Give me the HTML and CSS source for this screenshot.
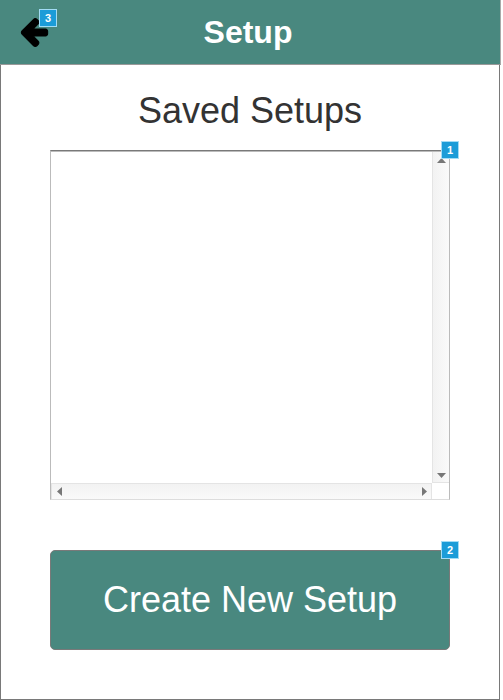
FILE: index.html
```html
<!DOCTYPE html>
<html lang="en">
<head>
<meta charset="utf-8">
<meta name="viewport" content="width=device-width, initial-scale=1">
<title>Setup</title>
<link rel="stylesheet" href="styles.css">
</head>
<body>
<div class="screen">
  <header class="header">
    <button class="back" type="button" aria-label="Back">
      <svg class="back-icon" viewBox="-20 0 1512 1600" aria-hidden="true"><path d="M1472 736v128q0 53-32.500 90.500t-84.500 37.500h-704l293 294q38 36 38 90t-38 90l-75 76q-37 37-90 37q-52 0-91-37l-651-652q-37-37-37-90q0-52 37-91l651-650q38-38 91-38q52 0 90 38l75 74q38 38 38 91t-38 91l-293 293h704q52 0 84.500 37.500t32.500 90.500z"/></svg>
      <span class="note">3</span>
    </button>
    <h1 class="title">Setup</h1>
  </header>
  <main class="content">
    <h2 class="heading">Saved Setups</h2>
    <section class="list" aria-label="Saved Setups">
      <div class="list-view"></div>
      <div class="bar bar-vertical">
        <button class="arrow" type="button" aria-label="Scroll up"><svg width="9" height="5" viewBox="0 0 9 5"><path d="M0 5L4.500 0L9 5z"/></svg></button>
        <button class="arrow" type="button" aria-label="Scroll down"><svg width="9" height="5" viewBox="0 0 9 5"><path d="M0 0L4.500 5L9 0z"/></svg></button>
      </div>
      <div class="bar bar-horizontal">
        <button class="arrow" type="button" aria-label="Scroll left"><svg width="5" height="9" viewBox="0 0 5 9"><path d="M5 0L0 4.500L5 9z"/></svg></button>
        <button class="arrow" type="button" aria-label="Scroll right"><svg width="5" height="9" viewBox="0 0 5 9"><path d="M0 0L5 4.500L0 9z"/></svg></button>
      </div>
      <span class="note note-corner">1</span>
    </section>
    <button class="create" type="button">Create New Setup<span class="note note-corner">2</span></button>
  </main>
</div>
</body>
</html>
```

FILE: styles.css
```css
* {
  box-sizing: border-box;
}

body {
  margin: 0;
  background: #fff;
  color: #333;
  font-family: "Liberation Sans", Arial, sans-serif;
}

button {
  margin: 0;
  padding: 0;
  border: 0;
  background: none;
  font: inherit;
  color: inherit;
}

.screen {
  min-height: 100vh;
  margin-right: 3px;
  border: 1px solid #797979;
  border-top: 0;
}

.header {
  display: grid;
  grid-template-columns: 48px 1fr 48px;
  align-items: center;
  height: 65px;
  margin: 0 -2px 0 -1px;
  padding-right: 4px;
  border-right: 1px solid #aaa;
  border-bottom: 1px solid #999;
  background: #49887f;
}

.back {
  position: relative;
  justify-self: end;
  width: 27px;
  height: 29px;
}

.back-icon {
  display: block;
  width: 27px;
  height: 29px;
  overflow: visible;
  stroke: #000;
  stroke-width: 60;
  stroke-linejoin: round;
}

.title {
  margin: 0;
  color: #fff;
  font-size: 32px;
  line-height: 38px;
  text-align: center;
}

.content {
  padding: 25px 49px 49px;
}

.heading {
  margin: 0 0 19px;
  font-size: 36px;
  font-weight: 400;
  line-height: 41px;
  text-align: center;
}

.list {
  position: relative;
  display: grid;
  grid-template-columns: 1fr 17px;
  grid-template-rows: 332px 16px;
  border: 1px solid #bbb;
  border-top-color: #797979;
  border-bottom-color: #ddd;
}

.list::before {
  content: "";
  position: absolute;
  top: 0;
  right: 0;
  left: 0;
  height: 1px;
  background: #bbb;
}

.bar {
  display: flex;
  justify-content: space-between;
  align-items: center;
  border: 1px solid #e4e4e4;
}

.bar-vertical {
  flex-direction: column;
  padding: 7px 0 4px;
  border-top: 0;
  border-right: 0;
  background: linear-gradient(to right, #f2f2f2, #fafafa);
}

.bar-horizontal {
  padding: 0 4px 0 5px;
  border-bottom: 0;
  background: linear-gradient(#f2f2f2, #fafafa);
}

.arrow {
  display: block;
}

.arrow svg {
  display: block;
  fill: #777;
}

.create {
  position: relative;
  display: block;
  width: 100%;
  height: 100px;
  margin-top: 50px;
  padding-bottom: 2px;
  border: 1px solid #797979;
  border-radius: 5px;
  background: #49887f;
  color: #fff;
  font-size: 36px;
  line-height: 41px;
}

.note {
  position: absolute;
  top: -9px;
  right: -9px;
  width: 18px;
  height: 18px;
  border: 1px solid #a3dcf5;
  background: #1b9cd8;
  color: #fff;
  font-size: 11px;
  font-weight: 700;
  line-height: 16px;
  text-align: center;
}

.note-corner {
  top: -10px;
  right: -10px;
}
```
